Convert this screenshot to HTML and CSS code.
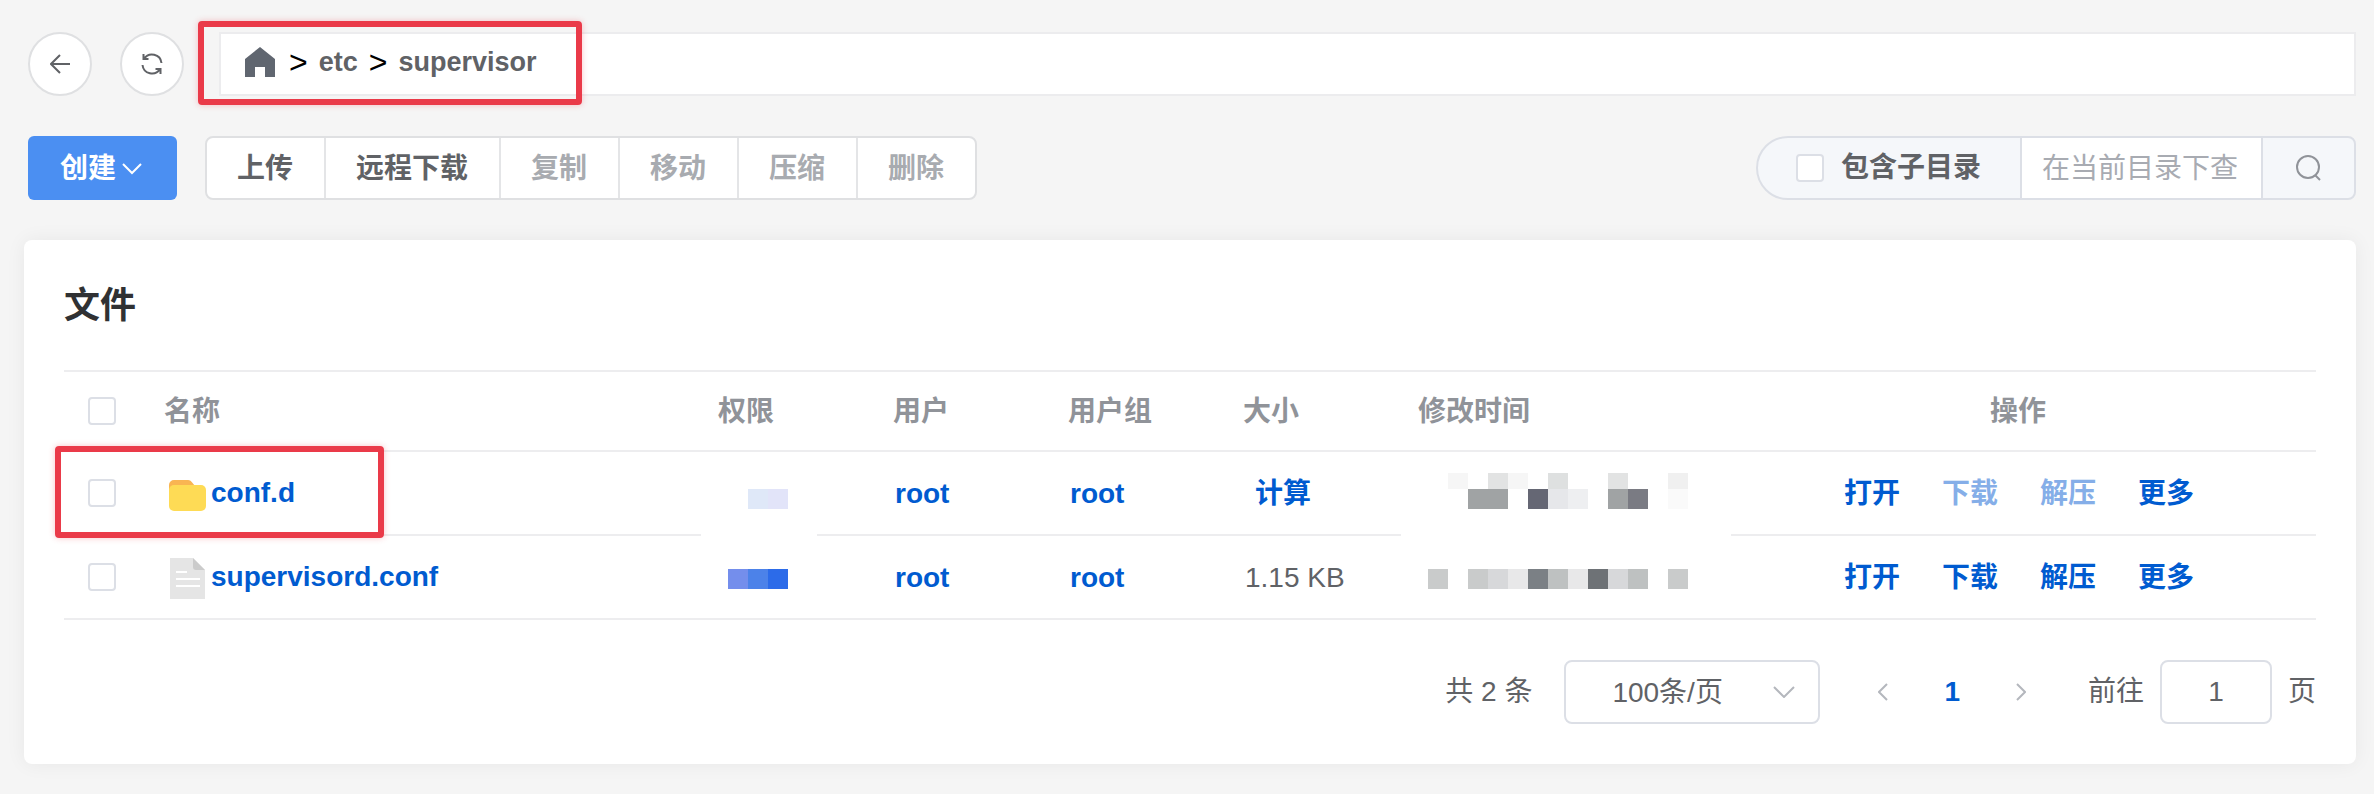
FILE: index.html
```html
<!DOCTYPE html>
<html lang="zh-CN">

<head>
    <meta charset="UTF-8">
    <meta name="viewport" content="width=device-width, initial-scale=1.0">
    <title>文件</title>
    <link rel="stylesheet" href="styles.css">
</head>

<body>
    <header class="path-bar">
        <button type="button" class="btn-circle" aria-label="返回">
            <svg width="20" height="20" viewBox="0 0 20 20"><path d="M20 10H1M10 1L1 10l9 9"/></svg>
        </button>
        <button type="button" class="btn-circle" aria-label="刷新">
            <svg width="22" height="22" viewBox="0 0 22 22"><path d="M2.500 1v5h5M3 6A9.500 9.500 0 0 1 20.500 10M19.500 21v-5h-5M19 16A9.500 9.500 0 0 1 1.500 12"/></svg>
        </button>
        <nav class="breadcrumb">
            <a href="#" aria-label="根目录">
                <svg class="home-icon" width="30" height="30" viewBox="0 0 30 30"><path d="M15 0L30 12v18H20V20H10v10H0V12z"/></svg>
            </a>
            <span class="sep">&gt;</span>
            <a href="#">etc</a>
            <span class="sep">&gt;</span>
            <a href="#">supervisor</a>
            <span class="mark mark-path"></span>
        </nav>
    </header>

    <div class="toolbar">
        <button type="button" class="btn-create">创建
            <svg width="20" height="12" viewBox="0 0 20 12"><path d="M1 1l9 9 9-9"/></svg>
        </button>
        <div class="btn-group">
            <button type="button">上传</button>
            <button type="button">远程下载</button>
            <button type="button" disabled>复制</button>
            <button type="button" disabled>移动</button>
            <button type="button" disabled>压缩</button>
            <button type="button" disabled>删除</button>
        </div>
        <div class="search">
            <label class="search-sub"><input type="checkbox" class="checkbox">包含子目录</label>
            <input type="text" class="search-input" placeholder="在当前目录下查找" aria-label="在当前目录下查找">
            <button type="button" class="search-btn" aria-label="搜索">
                <svg width="26" height="26" viewBox="0 0 26 26"><circle cx="12" cy="12" r="11"/><path d="M19.500 20.500L24 25"/></svg>
            </button>
        </div>
    </div>

    <main class="card">
        <h1>文件</h1>
        <table class="file-table">
            <colgroup>
                <col class="col-check">
                <col>
                <col class="col-small">
                <col class="col-small">
                <col class="col-small">
                <col class="col-small">
                <col class="col-time">
                <col class="col-ops">
            </colgroup>
            <thead>
                <tr>
                    <th class="check"><input type="checkbox" class="checkbox" aria-label="全选"></th>
                    <th>名称</th>
                    <th>权限</th>
                    <th>用户</th>
                    <th>用户组</th>
                    <th>大小</th>
                    <th>修改时间</th>
                    <th class="ops-head">操作</th>
                </tr>
            </thead>
            <tbody>
                <tr>
                    <td class="check">
                        <input type="checkbox" class="checkbox" aria-label="选择 conf.d">
                        <span class="mark mark-row"></span>
                    </td>
                    <td>
                        <a href="#" class="file-name">
                            <svg width="44" height="44" viewBox="0 0 44 44">
                                <path fill="#f9b552" d="M5 14a5 5 0 0 1 5-5h14c4 0 5 5 8 6v6H5z"/>
                                <rect x="5" y="14" width="37" height="26" rx="5" fill="#fedb55"/>
                            </svg>
                            conf.d
                        </a>
                    </td>
                    <td class="masked masked-mode">
                        <svg width="60" height="40" viewBox="0 0 60 40">
                            <path fill="#dfe8f8" d="M20 16h20v20H20z"/>
                            <path fill="#e2e4f9" d="M40 16h20v20H40z"/>
                        </svg>
                    </td>
                    <td><a href="#" class="link user">root</a></td>
                    <td><a href="#" class="link user">root</a></td>
                    <td><button type="button" class="link calc">计算</button></td>
                    <td class="masked masked-time">
                        <svg width="260" height="40" viewBox="0 0 260 40">
                            <path fill="#f6f6f6" d="M20 0h20v16H20zM80 0h20v16H80z"/>
                            <path fill="#e2e3e3" d="M60 0h20v16H60zM180 0h20v16h-20z"/>
                            <path fill="#dee0e0" d="M120 0h20v16h-20z"/>
                            <path fill="#f0f0f0" d="M240 0h20v16h-20z"/>
                            <path fill="#a0a3a4" d="M40 16h40v20H40zM180 16h20v20h-20z"/>
                            <path fill="#656774" d="M100 16h20v20h-20z"/>
                            <path fill="#e6e7ea" d="M120 16h20v20h-20z"/>
                            <path fill="#eeeff1" d="M140 16h20v20h-20z"/>
                            <path fill="#7a7b83" d="M200 16h20v20h-20z"/>
                            <path fill="#fafafa" d="M240 16h20v20h-20z"/>
                        </svg>
                    </td>
                    <td>
                        <div class="ops">
                            <button type="button" class="link">打开</button>
                            <button type="button" class="link" disabled>下载</button>
                            <button type="button" class="link" disabled>解压</button>
                            <button type="button" class="link">更多</button>
                        </div>
                    </td>
                </tr>
                <tr>
                    <td class="check"><input type="checkbox" class="checkbox" aria-label="选择 supervisord.conf"></td>
                    <td>
                        <a href="#" class="file-name">
                            <svg width="44" height="44" viewBox="0 0 44 44">
                                <path fill="#e5e5e5" d="M6 3h23l12 12v29H6z"/>
                                <path fill="#cbcbcb" d="M29 3l12 12H32a3 3 0 0 1-3-3z"/>
                                <path stroke="#fff" stroke-width="2" d="M12 17h11M12 24h24M12 31h24"/>
                            </svg>
                            supervisord.conf
                        </a>
                    </td>
                    <td class="masked">
                        <svg width="60" height="40" viewBox="0 0 60 40">
                            <path fill="#748eec" d="M0 12h20v20H0z"/>
                            <path fill="#4c82e9" d="M20 12h20v20H20z"/>
                            <path fill="#2c6be9" d="M40 12h20v20H40z"/>
                        </svg>
                    </td>
                    <td><a href="#" class="link user">root</a></td>
                    <td><a href="#" class="link user">root</a></td>
                    <td><span class="size">1.15 KB</span></td>
                    <td class="masked">
                        <svg width="260" height="40" viewBox="0 0 260 40">
                            <path fill="#c9cbcb" d="M0 12h20v20H0zM40 12h20v20H40zM240 12h20v20h-20z"/>
                            <path fill="#d7d8da" d="M60 12h20v20H60zM180 12h20v20h-20z"/>
                            <path fill="#e8e8e9" d="M80 12h20v20H80zM140 12h20v20h-20z"/>
                            <path fill="#7b8085" d="M100 12h20v20h-20z"/>
                            <path fill="#bec1c1" d="M120 12h20v20h-20zM200 12h20v20h-20z"/>
                            <path fill="#6e7276" d="M160 12h20v20h-20z"/>
                        </svg>
                    </td>
                    <td>
                        <div class="ops">
                            <button type="button" class="link">打开</button>
                            <button type="button" class="link">下载</button>
                            <button type="button" class="link">解压</button>
                            <button type="button" class="link">更多</button>
                        </div>
                    </td>
                </tr>
            </tbody>
        </table>

        <div class="pagination">
            <span>共 2 条</span>
            <div class="page-size">
                <select aria-label="每页条数">
                    <option>100条/页</option>
                </select>
                <svg width="22" height="12" viewBox="0 0 22 12"><path d="M1 1l10 10L21 1"/></svg>
            </div>
            <div class="pager">
                <button type="button" aria-label="上一页"><svg width="10" height="18" viewBox="0 0 10 18"><path d="M9 1L1 9l8 8"/></svg></button>
                <button type="button" class="active">1</button>
                <button type="button" aria-label="下一页"><svg width="10" height="18" viewBox="0 0 10 18"><path d="M1 1l8 8-8 8"/></svg></button>
            </div>
            <label class="jump">前往 <input type="text" value="1"> 页</label>
        </div>
    </main>
</body>

</html>
```
FILE: styles.css
```css
* {
    margin: 0;
    padding: 0;
    box-sizing: border-box;
}

body {
    font-family: "Liberation Sans", "Noto Sans CJK SC", sans-serif;
    font-size: 28px;
    line-height: 40px;
    color: #606266;
    background: #f5f5f5;
    padding: 32px 18px 30px 24px;
}

button,
input,
select {
    font: inherit;
    color: inherit;
    outline: none;
}

button {
    background: none;
    border: none;
    cursor: pointer;
}

a {
    color: inherit;
    text-decoration: none;
}

svg {
    display: block;
    fill: none;
    flex-shrink: 0;
}

.checkbox {
    appearance: none;
    display: block;
    width: 28px;
    height: 28px;
    border: 2px solid #dcdfe6;
    border-radius: 4px;
    background: #fff;
    flex-shrink: 0;
}

/* Red highlight frames */
.mark {
    position: absolute;
    z-index: 2;
    border: 6px solid #ea3a49;
    border-radius: 4px;
    box-shadow: 0 0 6px rgba(234, 58, 73, 0.3);
    pointer-events: none;
}

.mark-path {
    left: -23px;
    top: -13px;
    width: 384px;
    height: 84px;
}

.mark-row {
    left: -9px;
    top: -6px;
    width: 329px;
    height: 92px;
}

/* Path bar */
.path-bar {
    display: flex;
    gap: 28px;
    padding-left: 4px;
}

.btn-circle {
    display: flex;
    align-items: center;
    justify-content: center;
    width: 64px;
    height: 64px;
    border: 2px solid #dfe0e2;
    border-radius: 50%;
    background: #fff;
}

.btn-circle svg {
    stroke: #606266;
    stroke-width: 2;
}

.breadcrumb {
    position: relative;
    flex: 1;
    display: flex;
    align-items: center;
    gap: 11px;
    height: 64px;
    margin-left: 7px;
    padding: 0 24px 4px;
    border: 2px solid #ececee;
    background: #fff;
    font-size: 27px;
    font-weight: bold;
}

.home-icon {
    fill: #606670;
    margin-right: 3px;
}

.sep {
    color: #000;
    font-size: 32px;
    font-weight: normal;
}

/* Toolbar */
.toolbar {
    display: flex;
    margin-top: 40px;
    padding-left: 4px;
    font-weight: bold;
}

.btn-create {
    display: flex;
    align-items: center;
    gap: 6px;
    height: 64px;
    padding: 2px 35px 0 32px;
    border-radius: 6px;
    background: #4b8ff2;
    color: #fff;
}

.btn-create svg {
    stroke: #fff;
    stroke-width: 2;
}

.btn-group {
    display: flex;
    margin-left: 28px;
    border: 2px solid #dfe0e2;
    border-radius: 8px;
    background: #fff;
    overflow: hidden;
}

.btn-group button {
    height: 60px;
    padding: 2px 31px 0 30px;
}

.btn-group button + button {
    border-left: 2px solid #e4e5e7;
}

.btn-group button:disabled {
    color: #a8abb0;
}

.search {
    display: flex;
    width: 600px;
    margin-left: auto;
    border: 2px solid #dcdfe6;
    border-radius: 32px 8px 8px 32px;
    background: #f5f7fa;
    overflow: hidden;
}

.search-sub {
    display: flex;
    align-items: center;
    gap: 17px;
    padding: 0 39px 0 38px;
}

.search-input {
    flex: 1;
    min-width: 0;
    padding: 2px 24px 0 20px;
    border: solid #dcdfe6;
    border-width: 0 2px;
    background: #fff;
    background-clip: padding-box;
    font-weight: normal;
}

.search-input::placeholder {
    color: #a8abb2;
}

.search-btn {
    display: flex;
    align-items: center;
    justify-content: center;
    width: 91px;
    height: 60px;
}

.search-btn svg {
    stroke: #909399;
    stroke-width: 2;
}

/* File card */
.card {
    margin-top: 40px;
    padding: 0 40px 40px;
    border-radius: 8px;
    background: #fff;
    box-shadow: 0 0 20px rgba(0, 0, 0, 0.06);
}

.card h1 {
    padding: 46px 0 44px;
    font-size: 36px;
    line-height: 40px;
    color: #303133;
}

.file-table {
    width: 100%;
    table-layout: fixed;
    border-collapse: separate;
    border-spacing: 0;
    border-top: 2px solid #ededef;
}

.col-check {
    width: 80px;
}

.col-small {
    width: 175px;
}

.col-time {
    width: 322px;
}

.col-ops {
    width: 596px;
}

.file-table th,
.file-table td {
    position: relative;
    padding: 2px 20px 0;
    border-bottom: 2px solid #ededef;
    text-align: left;
    vertical-align: middle;
}

.file-table th {
    height: 80px;
    color: #909399;
}

.file-table td {
    height: 84px;
}

.file-table .check {
    padding: 0 24px;
}

.file-table .ops-head {
    text-align: center;
}

.file-name {
    display: flex;
    align-items: center;
    gap: 3px;
    margin-top: -2px;
    color: #005bd0;
    font-weight: bold;
}

.link {
    color: #005bd0;
    font-weight: bold;
}

.link:disabled {
    color: #85aee8;
}

.user,
.size {
    padding-left: 2px;
}

.calc {
    padding-left: 12px;
}

.file-table .masked {
    padding: 0 30px;
}

/* hides the row line below a masked value */
.masked-mode::after,
.masked-time::after {
    content: '';
    position: absolute;
    left: 3px;
    bottom: -2px;
    width: 116px;
    height: 2px;
    background: #fff;
    z-index: 1;
}

.masked-time::after {
    width: 330px;
}

.ops {
    display: flex;
    justify-content: center;
    gap: 42px;
    padding-left: 2px;
}

/* Pagination */
.pagination {
    display: flex;
    align-items: center;
    justify-content: flex-end;
    margin-top: 40px;
}

.page-size {
    display: grid;
    align-items: center;
    width: 256px;
    margin: 0 56px 0 32px;
}

.page-size select,
.page-size svg {
    grid-area: 1 / 1;
}

.page-size select {
    appearance: none;
    height: 64px;
    padding: 2px 0 0 46px;
    border: 2px solid #dcdfe6;
    border-radius: 8px;
    background: #fff;
}

.page-size svg {
    justify-self: end;
    margin-right: 25px;
    stroke: #b4b7bd;
    stroke-width: 2;
    pointer-events: none;
}

.pager {
    display: flex;
    gap: 54px;
}

.pager button {
    display: flex;
    align-items: center;
    justify-content: center;
    min-width: 14px;
    height: 40px;
}

.pager svg {
    stroke: #b4b7bd;
    stroke-width: 2;
}

.pager .active {
    color: #005bd0;
    font-weight: bold;
}

.jump {
    display: flex;
    align-items: center;
    gap: 16px;
    margin-left: 60px;
}

.jump input {
    width: 112px;
    height: 64px;
    border: 2px solid #dcdfe6;
    border-radius: 8px;
    text-align: center;
}
```
